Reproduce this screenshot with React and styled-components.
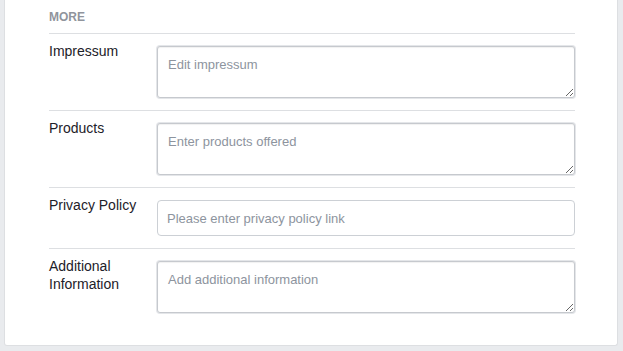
import React from "react";
import styled, { createGlobalStyle } from "styled-components";

const Global = createGlobalStyle`
  html, body {
    margin: 0;
    padding: 0;
    background: #e9ebee;
    font-family: "Liberation Sans", Arial, Helvetica, sans-serif;
  }
  body {
    padding: 0 5px 6px 4px;
  }
`;

const Card = styled.section`
  background: #fff;
  border: 1px solid #dddfe2;
  border-top: 0;
  border-radius: 0 0 3px 3px;
  padding: 9px 42px 20px 44px;
`;

const Heading = styled.h3`
  margin: 0;
  padding-bottom: 8px;
  font-size: 12px;
  line-height: 16px;
  font-weight: bold;
  color: #90949c;
  text-transform: uppercase;
  border-bottom: 1px solid #dddfe2;
`;

const Row = styled.div`
  display: grid;
  grid-template-columns: 108px 1fr;
  padding: 12px 0;
  border-bottom: ${(p) => (p.$last ? "0" : "1px solid #dddfe2")};
`;

const Label = styled.label`
  font-size: 14px;
  line-height: 18px;
  color: #1d2129;
  margin-top: -4px;
`;

const TextArea = styled.textarea`
  box-sizing: border-box;
  display: block;
  width: 100%;
  height: 52px;
  margin: 0;
  padding: 10px 10px 6px;
  border: 1px solid #c6c9ce;
  border-radius: 3px;
  box-shadow: inset 0 1px 1px rgba(0, 0, 0, 0.06), 0 0 0 1px #e4e6e9;
  font-family: inherit;
  font-size: 13px;
  line-height: 16px;
  color: #1d2129;
  resize: vertical;
  outline: none;
  &::placeholder {
    color: #8d949e;
  }
`;

const Input = styled.input`
  box-sizing: border-box;
  display: block;
  width: 100%;
  height: 36px;
  margin: 0;
  padding: 0 9px;
  border: 1px solid #ccd0d5;
  border-radius: 4px;
  font-family: inherit;
  font-size: 13px;
  color: #1d2129;
  outline: none;
  &::placeholder {
    color: #8d949e;
  }
`;

const fields = [
  { label: "Impressum", placeholder: "Edit impressum", multi: true },
  { label: "Products", placeholder: "Enter products offered", multi: true },
  { label: "Privacy Policy", placeholder: "Please enter privacy policy link", multi: false },
  { label: "Additional Information", placeholder: "Add additional information", multi: true },
];

export default function App() {
  return (
    <>
      <Global />
      <Card>
        <Heading>More</Heading>
        {fields.map((f, i) => (
          <Row key={f.label} $last={i === fields.length - 1}>
            <Label>{f.label}</Label>
            <div>
              {f.multi ? (
                <TextArea placeholder={f.placeholder} />
              ) : (
                <Input placeholder={f.placeholder} />
              )}
            </div>
          </Row>
        ))}
      </Card>
    </>
  );
}
